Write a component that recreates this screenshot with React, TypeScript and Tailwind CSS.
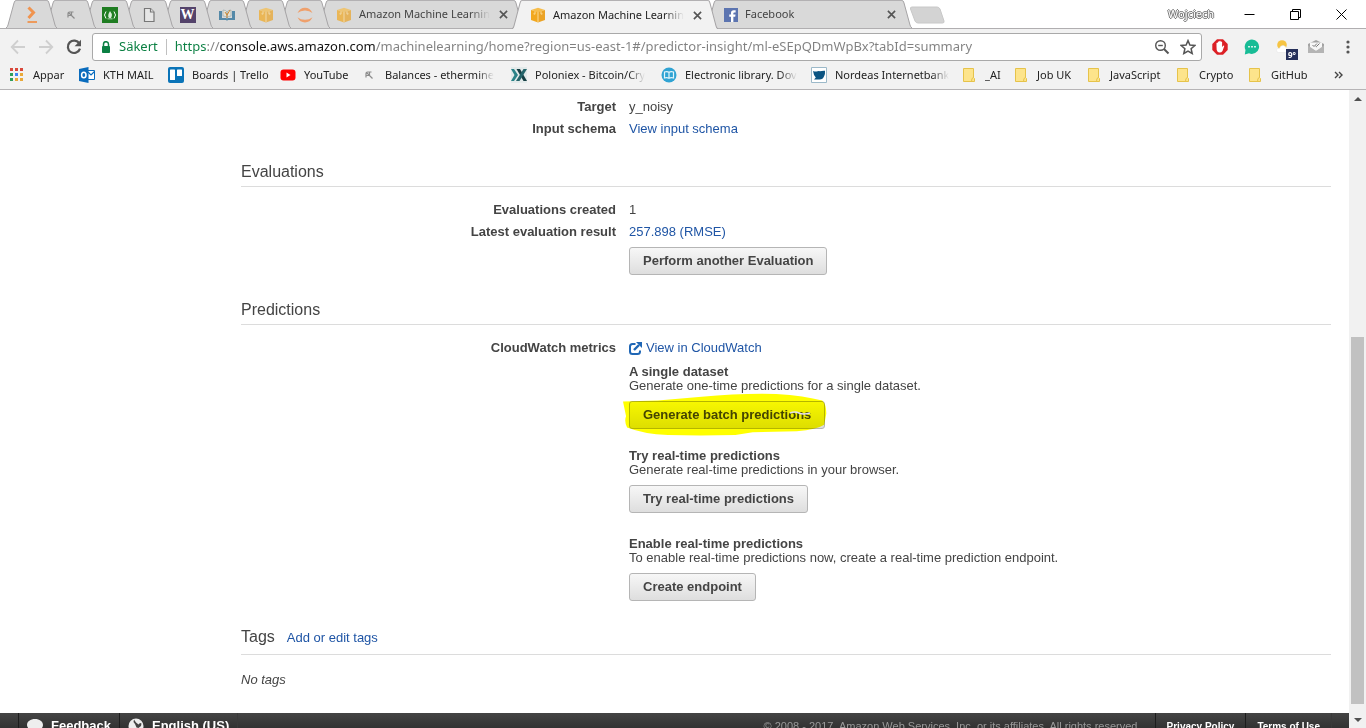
import type { ReactNode } from "react";

const Arrow = ({ flip = false }: { flip?: boolean }) => (
  <svg viewBox="0 0 16 16" className={flip ? "size-4 rotate-180" : "size-4"} fill="none" stroke="#cfcfcf" strokeWidth="1.8">
    <path d="M15 8H2M8 1.5 1.7 8 8 14.5" />
  </svg>
);

const Reload = () => (
  <svg viewBox="0 0 16 16" className="size-4" fill="none" stroke="#555" strokeWidth="2.2">
    <path d="M13.4 4.6A6.2 6.2 0 1 0 14 9.6" />
    <path d="M15 .8v6.4H8.6z" fill="#555" stroke="none" />
  </svg>
);

const OrangeShell = () => (
  <svg viewBox="0 0 16 18" className="h-[18px] w-4" fill="none" stroke="#f0934e">
    <path d="m4.5 1.5 5 5-5 5.5" strokeWidth="3" />
    <path d="M3.5 16H13" strokeWidth="1.8" />
  </svg>
);

const Pickaxe = () => (
  <svg viewBox="0 0 16 16" className="size-4" fill="none" stroke="#8c8c8c" strokeWidth="1.2">
    <path d="M5 10.500V6.500Q5 5 6.500 5H10.500M5.500 5.500l6 6M8.500 5.500v3H5.500" />
  </svg>
);

const GreenCamp = () => (
  <svg viewBox="0 0 16 16" className="size-4">
    <path fill="#1f7d22" d="M0 0h16v16H0z" />
    <path d="M4 4.500Q1 8 4 11.500M12 4.500Q15 8 12 11.500" fill="none" stroke="#fff" strokeWidth="1" />
    <path d="M8 4q2.500 3 1.800 5L9 11H7L6.200 9.500Q6 7 8 4M5.500 11.500h5v.8h-5z" fill="#d8ecd8" />
  </svg>
);

const Page = () => (
  <svg viewBox="0 0 16 16" className="size-4" fill="#e6e6e6" stroke="#777" strokeWidth="1.200">
    <path d="M3.500 1.500h6l3.500 3.500v9.500H3.500z" />
    <path d="M9.500 1.500V5H13" />
  </svg>
);

const WBadge = () => (
  <span className="flex size-4 items-center justify-center bg-[#54436b] font-['Liberation_Serif',serif] text-sm font-bold text-white">W</span>
);

const Library = () => (
  <svg viewBox="0 0 16 16" className="size-4">
    <path d="M0 4h3v7h4.500l.5 1 .5-1H13V4h3v9H9l-1 .8L7 13H0z" fill="#5489a8" />
    <path d="M4 3q3 0 4 2v6q-1-2-4-2zM12 3q-3 0-4 2v6q1-2 4-2z" fill="#e7e2d4" stroke="#8aa4ab" strokeWidth=".6" />
    <path d="M8 11V6M6 5l2 3 3-5" stroke="#c98a3a" fill="none" />
  </svg>
);

const Cube = ({ faded = false }: { faded?: boolean }) => (
  <svg viewBox="0 0 16 16" className={faded ? "size-4 opacity-70" : "size-4"}>
    <path d="M1 3 8 4.500V15.500l-7-2.500z" fill="#f2a81f" />
    <path d="m15 3-7 1.500v11l7-2.500z" fill="#eba326" />
    <path d="M1 3 8 .8l7 2.200-7 2z" fill="#f7bd4a" />
    <path d="M8 5v10M5 4.200v3l-1.500-.4M11 4.200v3l1.500-.4" stroke="#fde2a5" strokeWidth=".9" fill="none" />
  </svg>
);

const Jupyter = () => (
  <svg viewBox="0 0 16 16" className="size-4" fill="#efa06c">
    <path d="M.5 6Q3 .8 8 .8T15.500 6Q12.500 3.500 8 3.500T.5 6M.5 10.200Q3 15.400 8 15.400t7.500-5.200Q12.500 12.700 8 12.700T.5 10.200" />
  </svg>
);

const Facebook = () => (
  <svg viewBox="0 0 16 16" className="size-[14px]">
    <path fill="#5c74b0" d="M0 0h16v16H0z" />
    <path fill="#fff" d="M8 16V10H6V7.400h2V5.500Q8 2.500 11 2.500h2.300V5h-1.600q-1 0-1 1v1.400h2.500L12.800 10h-2.100v6z" />
  </svg>
);

const Lock = () => (
  <svg viewBox="0 0 10 13" className="h-[13px] w-[10px]">
    <path d="M1.500 5.500h7v6h-7z" fill="#0b8043" stroke="#0b8043" strokeLinejoin="round" />
    <path d="M2.500 5V3.200a2.500 2.500 0 0 1 5 0V5" fill="none" stroke="#0b8043" strokeWidth="1.500" />
  </svg>
);

const Apps = () => (
  <svg viewBox="0 0 14 14" className="size-[14px]">
    {["#d9483b", "#d9483b", "#d9483b", "#2f9e5b", "#4285f4", "#e9a93a", "#2f9e5b", "#e9a93a", "#e9a93a"].map((c, i) => (
      <rect key={i} x={(i % 3) * 5} y={Math.floor(i / 3) * 5} width="3" height="3" fill={c} />
    ))}
  </svg>
);

const Outlook = () => (
  <svg viewBox="0 0 16 16" className="size-4">
    <path d="M8 3.500h7.500v9H8z" fill="#fff" stroke="#0a6cbd" />
    <path d="m9 5 3 3 3.500-3.500" fill="none" stroke="#0a6cbd" strokeWidth="1.200" />
    <path d="m0 2 9.500-2v16L0 14z" fill="#0a6cbd" />
    <ellipse cx="4.800" cy="8" rx="2.200" ry="2.800" fill="none" stroke="#fff" strokeWidth="1.500" />
  </svg>
);

const Trello = () => (
  <svg viewBox="0 0 16 16" className="size-4">
    <rect width="16" height="16" rx="2" fill="#0a74b8" />
    <rect x="2" y="2.500" width="5" height="10.500" rx=".6" fill="#fff" />
    <rect x="9" y="2.500" width="5" height="6.500" rx=".6" fill="#fff" />
  </svg>
);

const YouTube = () => (
  <svg viewBox="0 0 16 16" className="size-4">
    <rect x=".5" y="2.500" width="15" height="11" rx="3" fill="#f00" />
    <path d="m6.500 5.500 4 2.500-4 2.500z" fill="#fff" />
  </svg>
);

const Poloniex = () => (
  <svg viewBox="0 0 16 16" className="size-4">
    <path d="M0 0h16v16H0z" fill="#e3eaea" />
    <path d="M0 2h3l4 6-4 6H0l3.500-6z" fill="#2b8287" />
    <path d="M5.500 2h3.500l7 12h-3.500z" fill="#173f44" />
    <path d="M12.500 2H16l-7.500 12H5z" fill="#25656b" />
  </svg>
);

const BlueBook = () => (
  <svg viewBox="0 0 16 16" className="size-4">
    <circle cx="8" cy="8" r="7.500" fill="#2fa3d3" />
    <path d="M3.500 5Q6 4 8 5.200 10 4 12.500 5v6Q10 10.200 8 11.300 6 10.200 3.500 11zM8 5v6" fill="none" stroke="#e3f5fb" strokeWidth="1.200" />
  </svg>
);

const Nordea = () => (
  <svg viewBox="0 0 16 16" className="size-4">
    <path d="M.5.5h15v15H.5z" fill="#fff" stroke="#9cb9c9" />
    <path d="M2 4q2.500 1 4.500.3 1.500-.6 2.500 0 2-.8 5-.6.300 3-.8 5.300Q12 12.500 8.500 12.500H3l1.800-2Q2.500 8 2 4" fill="#0b5482" />
  </svg>
);

const Folder = () => (
  <svg viewBox="0 0 14 16" className="h-4 w-[14px]">
    <path d="M1.500 1.500h10v9l1 1v3h-11z" fill="#fde48b" stroke="#e6c34a" />
    <path d="M9.500 14.500q0-4 2-4" fill="none" stroke="#e6c34a" />
  </svg>
);

function Tab({ icon, title, label, active = false, z }: { icon: ReactNode; title?: string; label: string; active?: boolean; z: string }) {
  const fill = active ? "#f2f2f2" : "#d9d9d9";
  return (
    <div className={`relative -mr-3 flex shrink-0 ${active ? "h-[29px]" : "h-7"} ${title ? "w-[206px]" : "w-[51px]"} ${z}`}>
      <svg viewBox="0 0 10 28" preserveAspectRatio="none" className="h-full w-[10px] shrink-0">
        <path d="M0 28Q1.500 27 2 25L8 3Q8.500.5 10 .5V28z" fill={fill} />
        <path d="M0 28Q1.500 27 2 25L8 3Q8.500.5 10 .5" fill="none" stroke="#a6a4a6" />
      </svg>
      <div className={`flex min-w-0 flex-1 items-center border-t border-[#b3b1b3] ${active ? "bg-[#f2f2f2]" : "bg-[#d9d9d9]"}`}>
        <button type="button" aria-label={label} className={`flex min-w-0 flex-1 items-center gap-[7px] ${title ? "pl-2" : "justify-center"}`}>
          {icon}
          {title && (
            <span className={`text-left text-[11px] whitespace-nowrap ${title.length > 12 ? "[mask-image:linear-gradient(to_right,black_85%,transparent)]" : ""} ${active ? "text-[#222]" : "text-[#444]"}`}>
              {title}
            </span>
          )}
        </button>
        {title && (
          <button type="button" aria-label={`Close ${title}`} className="mr-[5px] flex size-3 items-center justify-center">
            <svg viewBox="0 0 10 10" className="size-[9px]" stroke="#555" strokeWidth="1.800">
              <path d="m1 1 8 8M9 1 1 9" />
            </svg>
          </button>
        )}
      </div>
      <svg viewBox="0 0 10 28" preserveAspectRatio="none" className="h-full w-[10px] shrink-0">
        <path d="M10 28Q8.500 27 8 25L2 3Q1.500.5 0 .5V28z" fill={fill} />
        <path d="M10 28Q8.500 27 8 25L2 3Q1.500.5 0 .5" fill="none" stroke="#a6a4a6" />
      </svg>
    </div>
  );
}

function TabStrip() {
  return (
    <nav aria-label="Tabs" className="relative z-10 flex h-7 items-start bg-white pl-[6px]">
      <Tab z="z-[11]" label="Shell" icon={<OrangeShell />} />
      <Tab z="z-[10]" label="Ethermine" icon={<Pickaxe />} />
      <Tab z="z-[9]" label="Free camp" icon={<GreenCamp />} />
      <Tab z="z-[8]" label="Document" icon={<Page />} />
      <Tab z="z-[7]" label="Wiki" icon={<WBadge />} />
      <Tab z="z-[6]" label="Library" icon={<Library />} />
      <Tab z="z-[5]" label="AWS" icon={<Cube faded />} />
      <Tab z="z-[4]" label="Jupyter" icon={<Jupyter />} />
      <Tab z="z-[3]" label="Amazon Machine Learnin" title="Amazon Machine Learnin" icon={<Cube faded />} />
      <Tab z="z-20" label="Amazon Machine Learnin" title="Amazon Machine Learnin" icon={<Cube />} active />
      <Tab z="z-[1]" label="Facebook" title="Facebook" icon={<Facebook />} />
      <button type="button" aria-label="New tab" className="mt-[6px] ml-[9px]">
        <svg viewBox="0 0 36 18" className="h-[18px] w-9">
          <path d="M3 1h25q2 0 3 2l4 12q.5 2-1.500 2H9q-2 0-3-2L1.500 3Q1 1 3 1" fill="#d3d3d3" stroke="#c8c8c8" />
        </svg>
      </button>
      <div className="ml-auto flex h-7 items-center pr-[2px]">
        <span className="mr-3 text-[11px] leading-4 text-white [text-shadow:1px_0_#777,-1px_0_#777,0_1px_#777,0_-1px_#777]">Wojciech</span>
        <button type="button" aria-label="Minimize" className="flex h-7 w-[46px] items-center justify-center">
          <svg viewBox="0 0 11 11" className="size-[11px]" stroke="#000"><path d="M.5 5.500h10" /></svg>
        </button>
        <button type="button" aria-label="Restore" className="flex h-7 w-[46px] items-center justify-center">
          <svg viewBox="0 0 11 11" className="size-[11px]" stroke="#000" fill="none"><path d="M.5 2.500h8v8h-8zM2.500 2.500v-2h8v8h-2" /></svg>
        </button>
        <button type="button" aria-label="Close" className="flex h-7 w-[46px] items-center justify-center">
          <svg viewBox="0 0 11 11" className="size-[11px]" stroke="#000"><path d="m.5.5 10 10M10.500.5l-10 10" /></svg>
        </button>
      </div>
    </nav>
  );
}

function IconButton({ label, children }: { label: string; children: ReactNode }) {
  return (
    <button type="button" aria-label={label} className="flex size-5 shrink-0 items-center justify-center">
      {children}
    </button>
  );
}

function Toolbar() {
  return (
    <div className="flex items-center gap-2 border-t border-[#b0aeb0] px-2 pt-1">
      <IconButton label="Back"><Arrow /></IconButton>
      <IconButton label="Forward"><Arrow flip /></IconButton>
      <IconButton label="Reload"><Reload /></IconButton>
      <div className="flex h-7 min-w-0 flex-1 items-center rounded-[3px] border border-[#a9a9a9] bg-white pl-2">
        <Lock />
        <span className="ml-2 text-[13px] text-[#0b8043]">Säkert</span>
        <span className="mx-2 h-4 w-px bg-[#c0c0c0]" />
        <input
          aria-label="Address"
          defaultValue="https://console.aws.amazon.com/machinelearning/home?region=us-east-1#/predictor-insight/ml-eSEpQDmWpBx?tabId=summary"
          className="min-w-0 flex-1 bg-[linear-gradient(to_right,#0b8043_32px,#808080_32px,#808080_45px,#111_45px,#111_201px,#808080_201px)] bg-clip-text text-[13px] text-transparent outline-none"
        />
        <div className="flex gap-[6px] pr-[3px]">
          <IconButton label="Zoom">
            <svg viewBox="0 0 16 16" className="size-4" fill="none" stroke="#555" strokeWidth="1.400">
              <circle cx="6.500" cy="6.500" r="4.800" />
              <path d="M4.200 6.500h4.600" />
              <path d="m10 10 4.500 4.500" strokeWidth="2" />
            </svg>
          </IconButton>
          <IconButton label="Bookmark this page">
            <svg viewBox="0 0 16 16" className="size-4" fill="none" stroke="#555" strokeWidth="1.500">
              <path d="m8 1.600 1.900 4.500 4.900.4-3.700 3.200 1.100 4.800L8 12l-4.200 2.500 1.100-4.800-3.700-3.200 4.900-.4z" />
            </svg>
          </IconButton>
        </div>
      </div>
      <div className="flex gap-3">
        <IconButton label="Ad blocker">
          <svg viewBox="0 0 16 16" className="size-4">
            <path d="M5 .3h6L15.700 5v6L11 15.700H5L.3 11V5z" fill="#dc2026" />
            <path d="M4.500 7.500V4q.8-.8 1.400 0V2.800q.8-.8 1.400 0V2q.8-.6 1.400 0v1q.8-.8 1.400 0v5l1.400-1.600q1 0 .7.900L10.500 12q-1 1.600-3 1.600T4.700 11z" fill="#fff" />
          </svg>
        </IconButton>
        <IconButton label="Chat">
          <svg viewBox="0 0 16 16" className="size-4">
            <path d="M8 .5A7.200 7.200 0 1 1 5 14.300L.8 15.500 1.500 11A7.200 7.200 0 0 1 8 .5" fill="#18bc96" />
            <path d="M4.200 7h1.600v1.600H4.200zm3 0h1.600v1.600H7.200zm3 0h1.600v1.600h-1.600z" fill="#fff" />
          </svg>
        </IconButton>
        <IconButton label="Weather">
          <span className="relative flex size-5">
            <svg viewBox="0 0 20 20" className="size-5">
              <circle cx="8" cy="8" r="4.800" fill="#f6c443" />
              <path d="M4.500 15.500Q2 15 2.500 12.800q.8-2 3-1.500 1-3.300 4-2.800 2.200.5 2.700 2.500 3.300-.3 3.300 2.300 0 2.200-2 2.200z" fill="#fff" stroke="#e2e2e2" strokeWidth=".5" />
            </svg>
            <span className="absolute top-3 left-3 flex h-[11px] w-3 items-center justify-center bg-[#26305a] text-[8px] font-bold text-white">9°</span>
          </span>
        </IconButton>
        <IconButton label="Mail">
          <svg viewBox="0 0 16 14" className="h-[14px] w-4">
            <path d="M0 4 8 0l8 4v9H0z" fill="#a3a3a3" />
            <path d="M2 2.500h12V8L8 11 2 8z" fill="#f7f7f7" />
            <path d="M0 5.500 8 11l8-5.500V13H0z" fill="#b4b4b4" />
            <path d="m4.500 5 1.500 1.500L9 3.500M7.500 6l.8.700L11.500 3.500" fill="none" stroke="#777" />
          </svg>
        </IconButton>
        <IconButton label="Menu">
          <svg viewBox="0 0 4 14" className="h-[14px] w-1" fill="#555">
            <circle cx="2" cy="2" r="1.600" /><circle cx="2" cy="7" r="1.600" /><circle cx="2" cy="12" r="1.600" />
          </svg>
        </IconButton>
      </div>
    </div>
  );
}

function Bookmark({ icon, text, width, fade = false }: { icon: ReactNode; text: string; width: string; fade?: boolean }) {
  return (
    <li className={`shrink-0 ${width}`}>
      <a href="#" className="flex items-center gap-2">
        <span className="flex w-4 shrink-0 justify-center">{icon}</span>
        <span className={fade ? "whitespace-nowrap [mask-image:linear-gradient(to_right,black_85%,transparent)]" : "whitespace-nowrap"}>{text}</span>
      </a>
    </li>
  );
}

function Bookmarks() {
  return (
    <div className="flex h-[29px] items-center border-b border-[#b6b4b6] pr-[22px] text-[11px] text-[#222]">
      <ul className="flex min-w-0 flex-1 items-center pl-[9px]">
        <Bookmark width="w-[70px]" icon={<Apps />} text="Appar" />
        <Bookmark width="w-[89px]" icon={<Outlook />} text="KTH MAIL" />
        <Bookmark width="w-28" icon={<Trello />} text="Boards | Trello" />
        <Bookmark width="w-[81px]" icon={<YouTube />} text="YouTube" />
        <Bookmark width="w-[150px]" fade icon={<Pickaxe />} text="Balances - ethermine" />
        <Bookmark width="w-[150px]" fade icon={<Poloniex />} text="Poloniex - Bitcoin/Cry" />
        <Bookmark width="w-[150px]" fade icon={<BlueBook />} text="Electronic library. Dov" />
        <Bookmark width="w-[150px]" fade icon={<Nordea />} text="Nordeas Internetbank" />
        <Bookmark width="w-[52px]" icon={<Folder />} text="_AI" />
        <Bookmark width="w-[73px]" icon={<Folder />} text="Job UK" />
        <Bookmark width="w-[89px]" icon={<Folder />} text="JavaScript" />
        <Bookmark width="w-[72px]" icon={<Folder />} text="Crypto" />
        <Bookmark width="w-[72px]" icon={<Folder />} text="GitHub" />
      </ul>
      <button type="button" aria-label="More bookmarks">
        <svg viewBox="0 0 10 8" className="h-2 w-[10px]" fill="none" stroke="#444" strokeWidth="1.400"><path d="m1 1 3 3-3 3M5 1l3 3-3 3" /></svg>
      </button>
    </div>
  );
}

function Row({ label, children }: { label?: string; children: ReactNode }) {
  return (
    <div className="grid grid-cols-[375px_1fr] gap-x-[13px] leading-[22px]">
      <dt className="text-right font-bold">{label}</dt>
      <dd>{children}</dd>
    </div>
  );
}

function GrayButton({ children }: { children: ReactNode }) {
  return (
    <button type="button" className="block h-7 rounded-[3px] border border-[#b5b5b5] bg-linear-to-b from-[#f7f7f7] to-[#dedede] px-[13px] text-[13px] leading-[26px] font-bold text-[#444]">
      {children}
    </button>
  );
}

function Action({ title, text, children }: { title: string; text: string; children: ReactNode }) {
  return (
    <div className="leading-[14px]">
      <h3 className="font-bold">{title}</h3>
      <p className="mb-2">{text}</p>
      {children}
    </div>
  );
}

const link = "text-[#1f55a5]";

function Content() {
  return (
    <main className="pt-[6px] pr-[18px] pb-[22px] pl-[241px] text-[13px] text-[#444]">
      <dl>
        <Row label="Target">y_noisy</Row>
        <Row label="Input schema"><a href="#" className={link}>View input schema</a></Row>
      </dl>
      <h2 className="mt-5 h-[27px] border-b border-[#dcdcdc] text-base leading-6">Evaluations</h2>
      <dl className="mt-3">
        <Row label="Evaluations created">1</Row>
        <Row label="Latest evaluation result">
          <a href="#" className={link}>257.898 (RMSE)</a>
          <div className="mt-1"><GrayButton>Perform another Evaluation</GrayButton></div>
        </Row>
      </dl>
      <h2 className="mt-[23px] h-[27px] border-b border-[#dcdcdc] text-base leading-6">Predictions</h2>
      <dl className="mt-3">
        <Row label="CloudWatch metrics">
          <a href="#" className={`flex items-center gap-1 ${link}`}>
            <svg viewBox="0 0 13 13" className="size-[13px]" fill="none" stroke="#1f66b5" strokeWidth="2">
              <path d="M6.500 2H3.500Q1 2 1 4.500v5Q1 12 3.500 12h5Q11 12 11 9.500V8.500" />
              <path d="m5 8 5-5" strokeWidth="2.400" />
              <path d="M7 0h6v6z" fill="#1f66b5" stroke="none" />
            </svg>
            View in CloudWatch
          </a>
          <div className="mt-[6px]">
            <Action title="A single dataset" text="Generate one-time predictions for a single dataset.">
              <div className="relative w-fit">
                <GrayButton>Generate batch predictions</GrayButton>
                <svg viewBox="0 0 200 46" preserveAspectRatio="none" className="pointer-events-none absolute -top-2 -left-[6px] h-[43px] w-[calc(100%+8px)] mix-blend-multiply">
                  <path d="M0 9 34 8 77 4Q115 0 150 1 178 3 195 8 199 12 199 22L197 34Q190 39 170 41L127 42 110 45Q75 46 44 45 20 44 4 37 1 30 3 25z" fill="#ff0" />
                </svg>
                <svg viewBox="0 0 22 4" className="pointer-events-none absolute top-[10px] right-[14px] h-1 w-[22px]" fill="none" stroke="#e4e0ee" strokeWidth="1.500">
                  <path d="M1 2q5-2 9 0t11 0" />
                </svg>
              </div>
            </Action>
          </div>
          <div className="mt-5">
            <Action title="Try real-time predictions" text="Generate real-time predictions in your browser.">
              <GrayButton>Try real-time predictions</GrayButton>
            </Action>
          </div>
          <div className="mt-6">
            <Action title="Enable real-time predictions" text="To enable real-time predictions now, create a real-time prediction endpoint.">
              <GrayButton>Create endpoint</GrayButton>
            </Action>
          </div>
        </Row>
      </dl>
      <div className="mt-6 flex h-[30px] items-baseline gap-3 border-b border-[#dcdcdc]">
        <h2 className="text-base leading-6">Tags</h2>
        <a href="#" className={link}>Add or edit tags</a>
      </div>
      <p className="mt-[14px] leading-[22px] italic">No tags</p>
    </main>
  );
}

function Footer() {
  return (
    <footer className="flex h-[26px] items-stretch bg-linear-to-b from-[#444] to-[#262626] text-[13px] font-bold text-white">
      <div className="w-[19px] border-r border-[#1c1c1c]" />
      <button type="button" className="flex items-center gap-2 border-r border-[#1c1c1c] px-2">
        <svg viewBox="0 0 16 14" className="h-[14px] w-4" fill="#eee"><path d="M8 0c4.500 0 8 2.500 8 6s-3.500 6-8 6l-4 2 .5-2.800Q0 9.500 0 6c0-3.500 3.500-6 8-6" /></svg>
        Feedback
      </button>
      <button type="button" className="flex items-center gap-2 border-r border-[#3a3a3a] px-2">
        <svg viewBox="0 0 16 16" className="size-4">
          <circle cx="8" cy="8" r="7.500" fill="#eee" />
          <path d="M6 1.500 8 4.500l2.500 2L12 5l1.500.5L13 8l-2.500 2-2-.5L7 6 5.500 4zM5 11l2.500 1L7 14.500 5 13z" fill="#444" />
        </svg>
        English (US)
      </button>
      <div className="ml-auto flex text-[11px]">
        <span className="flex items-center pr-[14px] font-normal text-[#999]">© 2008 - 2017, Amazon Web Services, Inc. or its affiliates. All rights reserved.</span>
        <a href="#" className="flex items-center border-l border-[#1c1c1c] px-[11px] text-[10px]">Privacy Policy</a>
        <a href="#" className="flex items-center border-l border-[#1c1c1c] px-[11px] text-[10px]">Terms of Use</a>
        <div className="w-[18px] border-l border-[#3a3a3a]" />
      </div>
    </footer>
  );
}

function ScrollBar() {
  return (
    <div className="flex w-[17px] shrink-0 flex-col bg-[#f1f1f1]">
      <button type="button" aria-label="Scroll up" className="flex h-[17px] items-center justify-center">
        <svg viewBox="0 0 8 4" className="h-1 w-2" fill="#505050"><path d="m0 4 4-4 4 4z" /></svg>
      </button>
      <div className="grow-[230]" />
      <div className="mx-[2px] grow-[367] bg-[#c1c1c1]" />
      <div className="grow-[7]" />
      <button type="button" aria-label="Scroll down" className="flex h-[17px] items-center justify-center">
        <svg viewBox="0 0 8 4" className="h-1 w-2" fill="#505050"><path d="m0 0 4 4 4-4z" /></svg>
      </button>
    </div>
  );
}

export default function App() {
  return (
    <div className="flex h-screen flex-col overflow-hidden bg-white">
      <header className="shrink-0 bg-[#f2f2f2] font-['Noto_Sans',sans-serif]">
        <TabStrip />
        <Toolbar />
        <Bookmarks />
      </header>
      <div className="flex min-h-0 flex-1 font-['Liberation_Sans',Arial,sans-serif]">
        <div className="min-w-0 flex-1 overflow-hidden">
          <Content />
          <Footer />
        </div>
        <ScrollBar />
      </div>
    </div>
  );
}
